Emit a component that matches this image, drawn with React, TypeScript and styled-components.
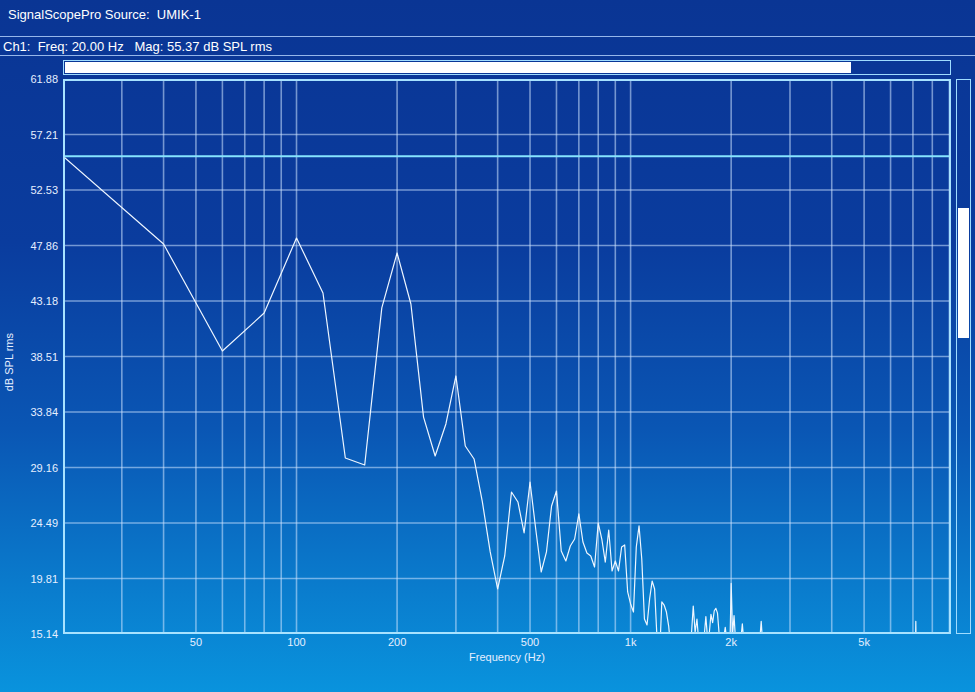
import React from 'react';
import styled, { createGlobalStyle } from 'styled-components';

const F_MIN = 20;
const F_MAX = 9100;
const BIN_HZ = 20;
const DB_TOP = 61.88;
const DB_BOTTOM = 15.14;
const PLOT_W = 888;
const PLOT_H = 555;
const CURSOR_DB = 55.37;

// magnitude per 20 Hz bin, from 20 Hz up to 1320 Hz
const LOW_BINS = [
  55.37, 47.98, 38.97, 42.17, 48.49, 43.86, 29.96, 29.37, 42.6, 47.23, 42.93, 33.41, 30.13,
  32.83, 36.87, 30.97, 29.88, 26.26, 22.05, 18.93, 21.71, 27.1, 26.26, 23.65, 27.94, 23.98,
  20.36, 22.05, 25.92, 27.18, 22.13, 21.29, 22.55, 23.14, 25.25, 22.89, 21.96, 21.71, 20.78,
  24.49, 23.14, 21.2, 23.9, 20.45, 21.29, 20.45, 22.47, 22.64, 18.68, 17.67, 16.99, 22.47,
  24.24, 21.46, 16.4, 15.9, 18.09, 19.6, 18.93, 14.72, 13.03, 17.84, 17.58, 16.99, 15.81, 13.88,
];

// the few bins above the floor after that
const PEAKS: Record<number, number> = {
  1520: 15.0, 1540: 17.5, 1560: 15.3, 1580: 16.4, 1600: 14.4,
  1660: 14.9, 1680: 16.6, 1700: 14.7,
  1720: 15.2, 1740: 16.8, 1760: 16.1, 1780: 17.1, 1800: 17.3, 1820: 16.9, 1840: 15.2,
  1900: 14.8, 1920: 15.7, 1940: 14.6,
  2000: 19.4, 2020: 15.1, 2040: 16.7, 2060: 14.7,
  2140: 14.8, 2160: 16.0, 2180: 14.6,
  2440: 14.9, 2460: 16.2, 2480: 14.7,
  7140: 16.2,
};
const NOISE_FLOOR = 13.2;

const Y_LABELS = ['61.88', '57.21', '52.53', '47.86', '43.18', '38.51', '33.84', '29.16', '24.49', '19.81', '15.14'];
const X_LABELS = [
  { f: 50, text: '50' },
  { f: 100, text: '100' },
  { f: 200, text: '200' },
  { f: 500, text: '500' },
  { f: 1000, text: '1k' },
  { f: 2000, text: '2k' },
  { f: 5000, text: '5k' },
];

const xOf = (f: number) => (Math.log10(f / F_MIN) / Math.log10(F_MAX / F_MIN)) * PLOT_W;
const yOf = (db: number) => ((DB_TOP - db) / (DB_TOP - DB_BOTTOM)) * PLOT_H;

const gridFreqs = () => {
  const out: number[] = [];
  for (let decade = 10; decade <= 1000; decade *= 10) {
    for (let m = 1; m <= 9; m++) {
      const f = m * decade;
      if (f > F_MIN && f < F_MAX) out.push(f);
    }
  }
  return out;
};

const tracePath = () => {
  const pts: string[] = [];
  const bins = Math.floor(F_MAX / BIN_HZ);
  for (let k = 1; k <= bins; k++) {
    const f = k * BIN_HZ;
    const db = k <= LOW_BINS.length ? LOW_BINS[k - 1] : PEAKS[f] ?? NOISE_FLOOR;
    pts.push(`${xOf(f).toFixed(2)},${yOf(db).toFixed(2)}`);
  }
  return 'M' + pts.join('L');
};

const GlobalStyle = createGlobalStyle`
  html, body {
    margin: 0;
    padding: 0;
  }
  body {
    font-family: "Liberation Sans", Arial, Helvetica, sans-serif;
    background: #0a3594;
  }
`;

const Screen = styled.div`
  width: 975px;
  height: 692px;
  overflow: hidden;
  display: flex;
  flex-direction: column;
  color: #ffffff;
  background: linear-gradient(180deg, #0a3594 0%, #0a3c9e 35%, #0a56b4 62%, #0a7ccd 85%, #0993dd 100%);
`;

const TitleBar = styled.div`
  height: 37px;
  padding: 0 8px 7px;
  box-sizing: border-box;
  display: flex;
  align-items: center;
  font-size: 13px;
  white-space: pre;
  border-bottom: 1px solid rgba(185, 215, 255, 0.8);
`;

const StatusBar = styled.div`
  height: 19px;
  padding: 0 3px;
  box-sizing: border-box;
  display: flex;
  align-items: center;
  font-size: 13px;
  white-space: pre;
  border-bottom: 1px solid rgba(185, 215, 255, 0.8);
`;

const ChartGrid = styled.div`
  display: grid;
  grid-template-columns: 63px ${PLOT_W}px 20px;
  grid-template-rows: 23px ${PLOT_H}px 16px 14px;
`;

const HScroll = styled.div`
  grid-column: 2;
  grid-row: 1;
  align-self: start;
  margin-top: 4px;
  height: 15px;
  box-sizing: border-box;
  border: 1.5px solid #9fdcff;
  padding: 1px;
  display: flex;
`;

const HThumb = styled.div<{ $fraction: number }>`
  width: ${(p) => p.$fraction * 100}%;
  background: #ffffff;
`;

const YAxis = styled.div`
  grid-column: 1;
  grid-row: 2;
  display: flex;
`;

const YTitle = styled.div`
  writing-mode: vertical-rl;
  transform: rotate(180deg);
  align-self: center;
  margin: 12px 0 0 3px;
  font-size: 11px;
  color: #e6efff;
`;

const YTicks = styled.div`
  flex: 1;
  display: flex;
  flex-direction: column;
  justify-content: space-between;
  align-items: flex-end;
  margin: -7px 5px -7px 0;
  font-size: 11px;
  line-height: 14px;
  color: #e6efff;
`;

const PlotSvg = styled.svg`
  grid-column: 2;
  grid-row: 2;
  display: block;
`;

const VScroll = styled.div`
  grid-column: 3;
  grid-row: 2;
  margin-left: 5px;
  width: 15px;
  box-sizing: border-box;
  border: 1.5px solid #9fdcff;
  padding: 0 1px;
  display: flex;
  flex-direction: column;
`;

const VThumb = styled.div<{ $offset: number; $length: number }>`
  margin-top: ${(p) => p.$offset}px;
  height: ${(p) => p.$length}px;
  background: #ffffff;
`;

const XTicks = styled.div`
  grid-column: 2;
  grid-row: 3;
  position: relative;
  font-size: 11px;
  line-height: 16px;
  color: #e6efff;
`;

const XTick = styled.span`
  position: absolute;
  top: 0;
  transform: translateX(-50%);
`;

const XTitle = styled.div`
  grid-column: 2;
  grid-row: 4;
  text-align: center;
  font-size: 11px;
  line-height: 14px;
  color: #e6efff;
`;

const Plot = () => {
  const rows = Array.from({ length: 9 }, (_, i) => ((i + 1) * PLOT_H) / 10);
  const cursorY = yOf(CURSOR_DB);
  return (
    <PlotSvg width={PLOT_W} height={PLOT_H} viewBox={`0 0 ${PLOT_W} ${PLOT_H}`}>
      <defs>
        <clipPath id="plot-clip">
          <rect x={0} y={0} width={PLOT_W} height={PLOT_H} />
        </clipPath>
      </defs>
      <g stroke="rgba(205, 228, 255, 0.55)" strokeWidth={1.6}>
        {gridFreqs().map((f) => (
          <line key={f} x1={xOf(f)} x2={xOf(f)} y1={0} y2={PLOT_H} />
        ))}
        {rows.map((y) => (
          <line key={y} x1={0} x2={PLOT_W} y1={y} y2={y} />
        ))}
      </g>
      <line x1={0} x2={PLOT_W} y1={cursorY} y2={cursorY} stroke="#86e4ff" strokeWidth={2} />
      <path
        d={tracePath()}
        clipPath="url(#plot-clip)"
        fill="none"
        stroke="#eef6ff"
        strokeWidth={1.2}
        strokeLinejoin="round"
      />
      <rect x={1} y={1} width={PLOT_W - 2} height={PLOT_H - 2} fill="none" stroke="#a8e2ff" strokeWidth={2} />
    </PlotSvg>
  );
};

const App = () => {
  return (
    <>
      <GlobalStyle />
      <Screen>
        <TitleBar>SignalScopePro Source:  UMIK-1</TitleBar>
        <StatusBar>Ch1:  Freq: 20.00 Hz   Mag: 55.37 dB SPL rms</StatusBar>
        <ChartGrid>
          <HScroll>
            <HThumb $fraction={0.889} />
          </HScroll>
          <YAxis>
            <YTitle>dB SPL rms</YTitle>
            <YTicks>
              {Y_LABELS.map((l) => (
                <span key={l}>{l}</span>
              ))}
            </YTicks>
          </YAxis>
          <Plot />
          <VScroll>
            <VThumb $offset={128} $length={130} />
          </VScroll>
          <XTicks>
            {X_LABELS.map((t) => (
              <XTick key={t.text} style={{ left: xOf(t.f) }}>
                {t.text}
              </XTick>
            ))}
          </XTicks>
          <XTitle>Frequency (Hz)</XTitle>
        </ChartGrid>
      </Screen>
    </>
  );
};

export default App;
